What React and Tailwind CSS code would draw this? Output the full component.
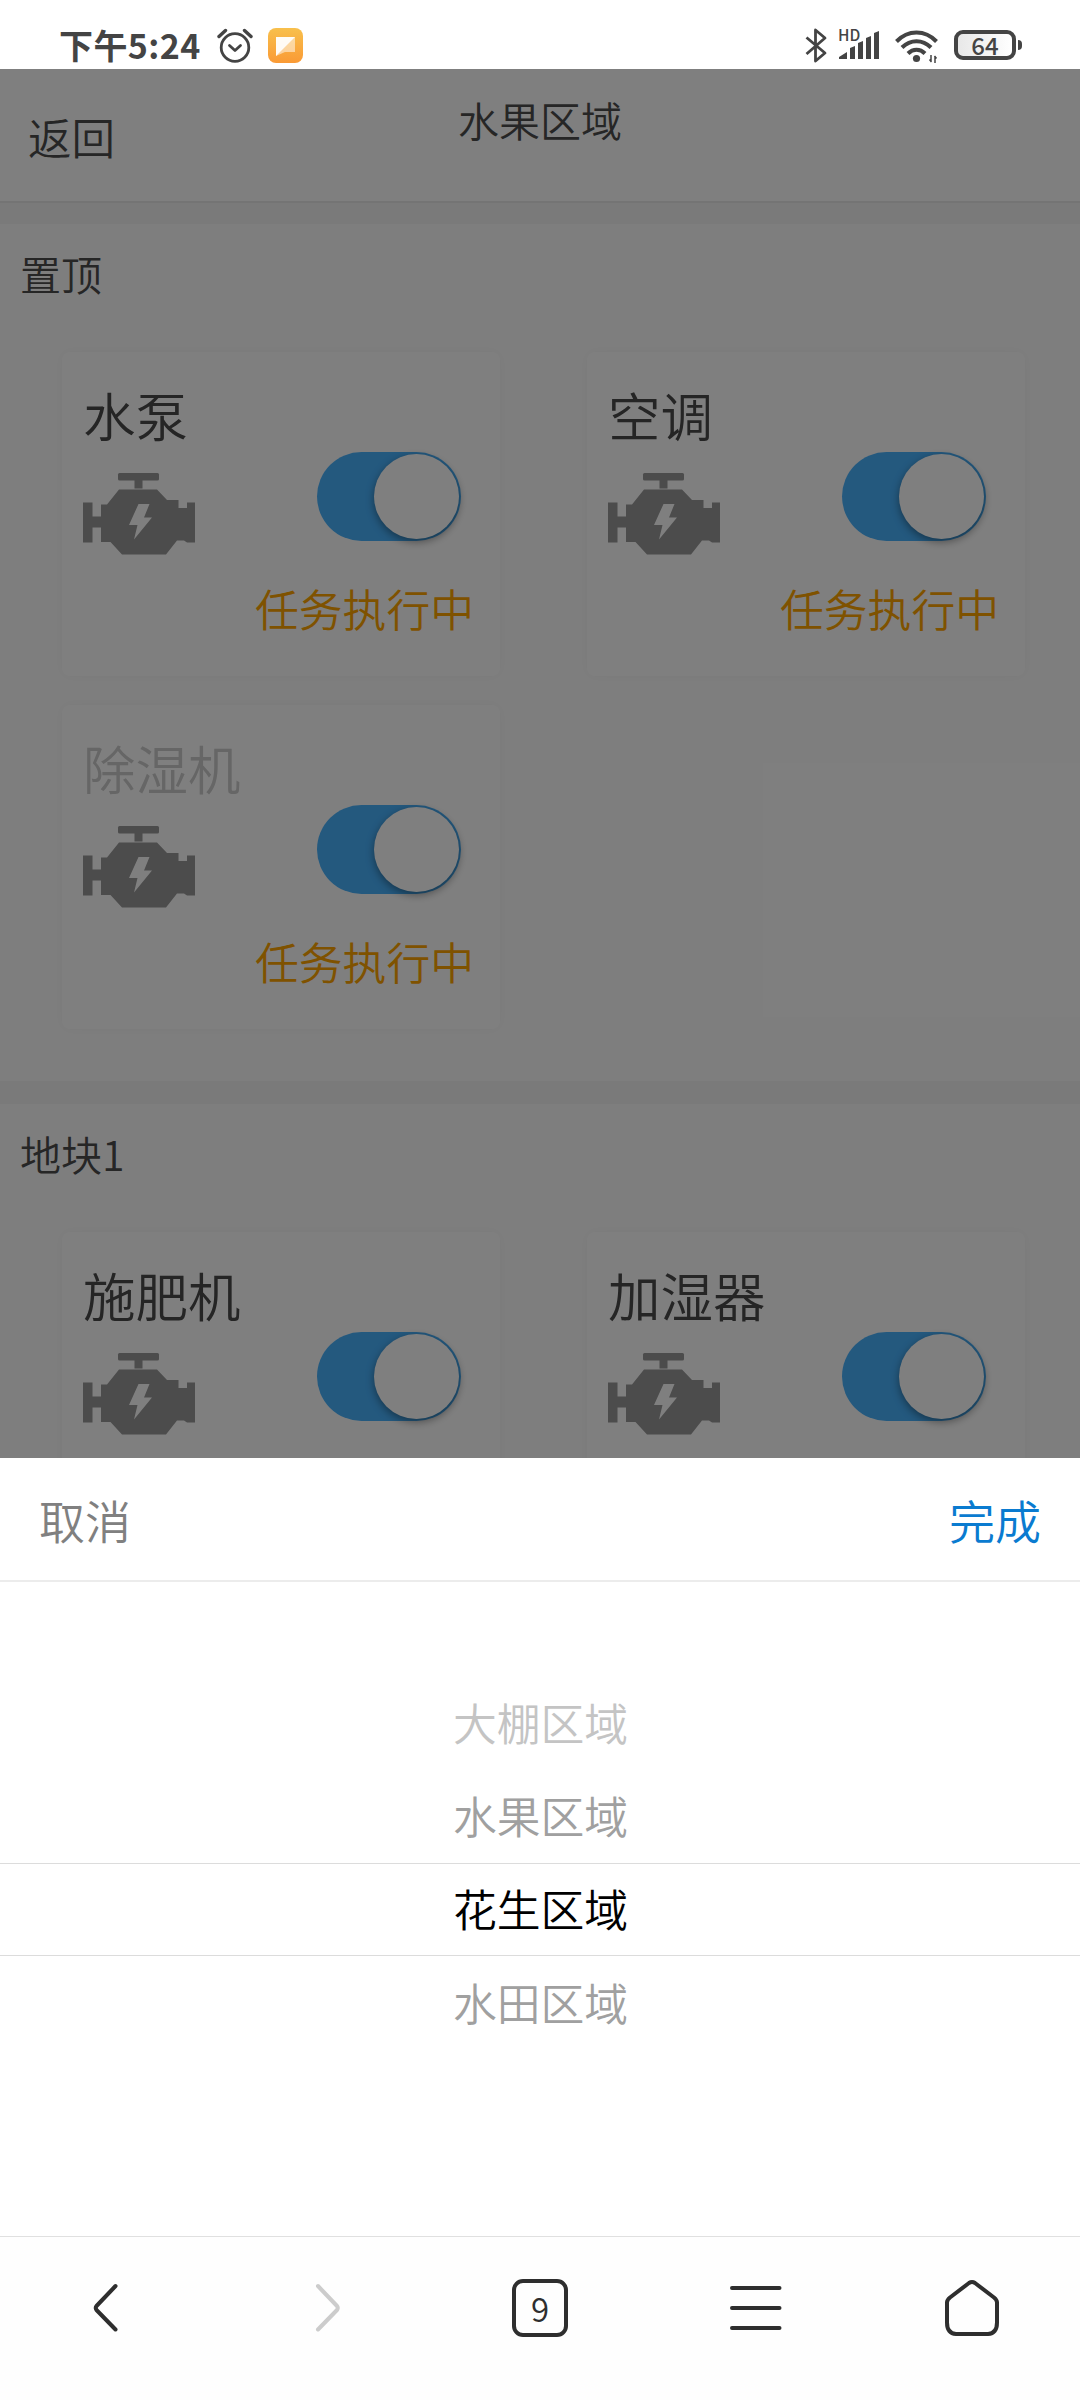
/* eslint-disable react/prop-types */
import { useState } from "react";

const SECTIONS = [
  {
    title: "置顶",
    devices: [
      { name: "水泵", online: true, status: "任务执行中" },
      { name: "空调", online: true, status: "任务执行中" },
      { name: "除湿机", online: false, status: "任务执行中" },
    ],
  },
  {
    title: "地块1",
    devices: [
      { name: "施肥机", online: true },
      { name: "加湿器", online: true },
    ],
  },
];

const AREAS = ["大棚区域", "水果区域", "花生区域", "水田区域"];

const StatusBar = () => (
  <div className="h-[69px] shrink-0 flex items-start bg-white pl-[59px] pr-[58px] pt-[28px] text-[#444444]">
    <div className="text-[34px] leading-[34px] font-semibold tracking-[0.4px] whitespace-nowrap w-[158px]">
      下午5:24
    </div>
    <svg width="36" height="35" viewBox="0 0 36 35" fill="none" stroke="currentColor" strokeWidth="2.8" strokeLinecap="round">
      <circle cx="18" cy="19.5" r="13.8" />
      <path d="M12.5 17.5l5.5 5 5.5-5" strokeLinejoin="round" />
      <path d="M2 8.5L8.5 2.5M34 8.5L27.5 2.5" strokeWidth="3.4" />
    </svg>
    <svg className="ml-[15px]" width="35" height="35" viewBox="0 0 35 35">
      <defs>
        <linearGradient id="note" x1="0" y1="0" x2="0" y2="1">
          <stop offset="0" stopColor="#f8c04c" />
          <stop offset="1" stopColor="#fa9a35" />
        </linearGradient>
      </defs>
      <rect width="35" height="35" rx="8" fill="url(#note)" />
      <path d="M8 9H27V24H17L8 28Z" fill="#fff" opacity="0.5" />
      <path d="M8 9H27L8 28Z" fill="#fff" opacity="0.9" />
    </svg>
    <div className="ml-auto flex items-start">
      <svg width="22" height="35" viewBox="0 0 22 35" fill="none" stroke="currentColor" strokeWidth="2.8" strokeLinejoin="round">
        <path d="M1.5 9.5L20 25L10.5 33V2L20 10L1.5 26" />
      </svg>
      <div className="relative w-[42px] h-[32px] ml-[12px]">
        <span className="absolute -left-px top-0 text-[15.5px] leading-[13px] font-medium">HD</span>
        <svg width="42" height="32" viewBox="0 0 42 32" fill="currentColor">
          <path d="M0 31V29L8 24V31ZM11 31V20L16 18V31ZM19 31V15L24 13V31ZM27 31V10L32 8V31ZM35 31V5L40 3V31Z" />
        </svg>
      </div>
      <svg className="ml-[14px]" width="44" height="36" viewBox="0 0 44 36" fill="none" stroke="currentColor" strokeWidth="4">
        <path d="M1.5 13.5C13 1.5 30 1.5 41.5 13.5M7 19.5C15.5 11 27.5 11 36 19.5M13 25.5C18 20.5 25 20.5 30 25.5" />
        <circle cx="21.5" cy="30.5" r="3.6" fill="currentColor" stroke="none" />
        <path d="M36 27v7M34.5 31.5l2 2.5M40 35v-7M41.5 30.5l-2-2.5" strokeWidth="1.5" />
      </svg>
      <div className="ml-[15px] mt-[2px] w-[62px] h-[30px] rounded-[9px] border-4 border-current bg-linear-to-r from-[#e8e8e8] to-white flex items-center justify-center text-[24px] leading-[22px] font-medium">
        64
      </div>
      <div className="ml-[2px] mt-[12px] w-[4px] h-[10px] rounded-r-sm bg-current" />
    </div>
  </div>
);

const PumpIcon = () => (
  <svg width="113" height="83" viewBox="0 0 113 83" fill="#989898">
    <rect x="35" y="0" width="41" height="7.5" rx="1.5" />
    <rect x="51.5" y="7" width="8" height="8.5" />
    <path d="M36 16.5H74L84 27H95.5V35H104V29.5H112V69.5H104L101 67.5H94L83 81.5H39L27.5 69H18V54.5H9.5V69.5H0V29.5H9.5V43.5H18V31.5H24Z" />
    <path d="M55.5 31H66.5L61 44.5H69L51 66.5L54.5 52H46Z" fill="#fff" />
  </svg>
);

const Toggle = ({ checked, onChange }) => (
  <div
    className={
      "w-[144px] h-[89px] rounded-full p-[2px] flex " +
      (checked ? "bg-[#48b2fd] justify-end" : "bg-gray-200 justify-start")
    }
    onClick={() => onChange(!checked)}
  >
    <div className="w-[85px] h-[85px] rounded-full bg-white shadow-[0_3px_8px_rgba(0,0,0,0.4)]" />
  </div>
);

const DeviceCard = ({ device }) => {
  const [on, setOn] = useState(true);

  return (
    <div className="w-[438px] h-[324px] rounded-lg bg-white pl-[21px] pr-[26px] pt-[34px] shadow-[0_0_12px_rgba(0,0,0,0.04)]">
      <div
        className={
          "text-[52.5px] leading-[56px] font-[350] " +
          (device.online ? "text-[#4a4a4a]" : "text-[#cccccc]")
        }
      >
        {device.name}
      </div>
      <div className="flex justify-between h-[96px] mt-[10px] pr-[13px]">
        <div className="mt-[21px]">
          <PumpIcon />
        </div>
        <Toggle checked={on} onChange={setOn} />
      </div>
      {device.status && (
        <div className="mt-[36px] text-right text-[43.8px] leading-[48px] font-[350] text-[#ffa500]">
          {device.status}
        </div>
      )}
    </div>
  );
};

const Section = ({ section }) => (
  <div className="h-[857px] shrink-0 bg-[#fdfdfd] mb-[23px]">
    <div className="pl-[20px] pt-[22px] text-[41px] leading-[54px] font-[350] text-[#4c4c4c]">
      {section.title}
    </div>
    <div className="grid grid-cols-[438px_438px] gap-x-[87px] gap-y-[29px] pl-[62px] mt-[52px]">
      {section.devices.map((device) => (
        <DeviceCard key={device.name} device={device} />
      ))}
    </div>
  </div>
);

const AreaPicker = () => {
  const [selected, setSelected] = useState(2);

  return (
    <div className="h-[778px] shrink-0 bg-white flex flex-col font-[350]">
      <div className="h-[124px] shrink-0 flex items-center justify-between px-[39px] text-[46px] border-b-2 border-[#ececec]">
        <button className="text-[#808080]">取消</button>
        <button className="text-[#0a7bd0]">完成</button>
      </div>
      <div className="pt-[94px] flex flex-col text-[43.8px] text-center">
        {AREAS.map((area, i) => (
          <div
            key={area}
            onClick={() => setSelected(i)}
            className={
              "h-[93.3px] pl-px flex items-center justify-center " +
              (i === selected
                ? "border-y border-[#dcdcdc] text-black"
                : Math.abs(i - selected) === 1
                  ? "text-[#a0a0a0]"
                  : "text-[#c4c4c4]")
            }
          >
            {area}
          </div>
        ))}
      </div>
    </div>
  );
};

const BottomNav = () => (
  <div className="h-[164px] shrink-0 grid grid-cols-5 border-t border-[#e0e0e0] bg-[#fefefe] pt-[41px] text-[#2e2e2e]">
    <div className="flex justify-center">
      <svg width="60" height="60" viewBox="0 0 60 60" fill="none" stroke="currentColor" strokeWidth="4" strokeLinecap="round" strokeLinejoin="round">
        <path d="M37.5 8L18.5 28Q17 30 18.5 32L37.5 51.5" />
      </svg>
    </div>
    <div className="flex justify-center text-[#cccccc]">
      <svg width="60" height="60" viewBox="0 0 60 60" fill="none" stroke="currentColor" strokeWidth="4" strokeLinecap="round" strokeLinejoin="round">
        <path d="M24 8L43 28Q44.5 30 43 32L24 51.5" />
      </svg>
    </div>
    <div className="flex justify-center">
      <div className="mt-px w-[56px] h-[58px] rounded-[11px] border-4 border-current flex items-center justify-center text-[33px] leading-[33px] font-[350]">
        9
      </div>
    </div>
    <div className="flex justify-center">
      <svg width="60" height="60" viewBox="0 0 60 60" stroke="currentColor" strokeWidth="4" strokeLinecap="round">
        <path d="M6 10H53.5M6 30H53.5M6 50H53.5" />
      </svg>
    </div>
    <div className="flex justify-center">
      <svg width="60" height="60" viewBox="0 0 60 60" fill="none" stroke="currentColor" strokeWidth="4" strokeLinejoin="round">
        <path d="M27 5Q30 3 33 5L52 19.5Q55 22 55 24.5V44.5Q55 55.5 46 56H14Q5 55.5 5 44.5V24.5Q5 22 8 19.5Z" />
      </svg>
    </div>
  </div>
);

export default function App() {
  return (
    <div className="w-[1080px] h-[2400px] flex flex-col overflow-hidden bg-white font-['Noto_Sans_CJK_SC',sans-serif]">
      <StatusBar />
      <div className="relative h-[1389px] shrink-0 overflow-hidden flex flex-col bg-[#f4f4f4]">
        <div className="h-[134px] shrink-0 mb-[21px] bg-white border-b-2 border-[#e8e8e8] grid grid-cols-[1fr_auto_1fr] px-[28px] font-[350] text-[#4c4c4c]">
          <div className="mt-[38px] text-[43.5px] leading-[60px]">返回</div>
          <div className="mt-[21px] text-[41px] leading-[58px]">水果区域</div>
        </div>
        {SECTIONS.map((section) => (
          <Section key={section.title} section={section} />
        ))}
        <div className="absolute inset-0 bg-black/50" />
      </div>
      <AreaPicker />
      <BottomNav />
    </div>
  );
}
